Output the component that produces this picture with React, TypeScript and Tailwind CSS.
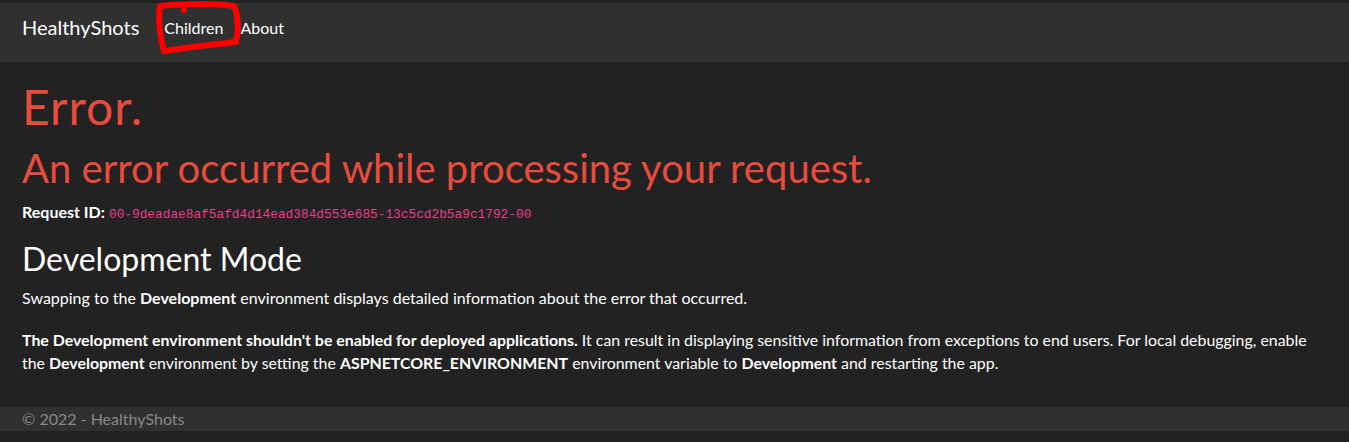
const App = () => {
  return (
    <div className="min-h-[442px] bg-[#222222] font-['Lato','Open_Sans',sans-serif] text-[16px] leading-[23px] text-white">
      <div className="h-[3px]" />
      <nav className="relative h-[59px] bg-[#303030] px-[22px]">
        <div className="flex h-[48px] items-center">
          <a className="mr-[25px] text-[20px] leading-[30px] text-white" href="#">HealthyShots</a>
          <a className="mr-[17px] text-white" href="#">Children</a>
          <a className="text-white" href="#">About</a>
        </div>
        <svg className="pointer-events-none absolute left-0 top-[-3px]" width="260" height="62" viewBox="0 0 260 62">
          <path
            d="M 236 41 C 239 30, 238 14, 234 6 C 212 3, 184 4, 160 6 C 158 20, 160 38, 164 51 C 186 48, 214 44, 236 42"
            fill="none"
            stroke="#ff0000"
            strokeWidth="6"
            strokeLinecap="round"
            strokeLinejoin="round"
          />
          <circle cx="184" cy="10" r="3" fill="#ff0000" />
        </svg>
      </nav>

      <main className="px-[22px] pt-[16px] pb-[33px]">
        <h1 className="mb-[8px] text-[48px] leading-[1.2] tracking-[1px] text-[#e74c3c]">Error.</h1>
        <h2 className="mb-[8px] text-[40px] leading-[1.2] text-[#e74c3c]">An error occurred while processing your request.</h2>
        <p className="mb-[14px]">
          <strong>Request ID:</strong>{" "}
          <code className="font-['Liberation_Mono',monospace] text-[12.8px] text-[#e83e8c]">
            00-9deadae8af5afd4d14ead384d553e685-13c5cd2b5a9c1792-00
          </code>
        </p>
        <h3 className="mb-[8px] text-[32px] leading-[1.2]">Development Mode</h3>
        <p className="mb-[19px]">
          Swapping to the <strong>Development</strong> environment displays detailed information about the error that occurred.
        </p>
        <p className="text-[15.9px]">
          <strong>The Development environment shouldn't be enabled for deployed applications.</strong> It can result in
          displaying sensitive information from exceptions to end users. For local debugging, enable the{" "}
          <strong>Development</strong> environment by setting the <strong>ASPNETCORE_ENVIRONMENT</strong> environment
          variable to <strong>Development</strong> and restarting the app.
        </p>
      </main>

      <footer className="h-[24px] bg-[#303030] px-[22px] leading-[24px] text-[#888888]">
        &copy; 2022 - HealthyShots
      </footer>
    </div>
  );
};

export default App;
